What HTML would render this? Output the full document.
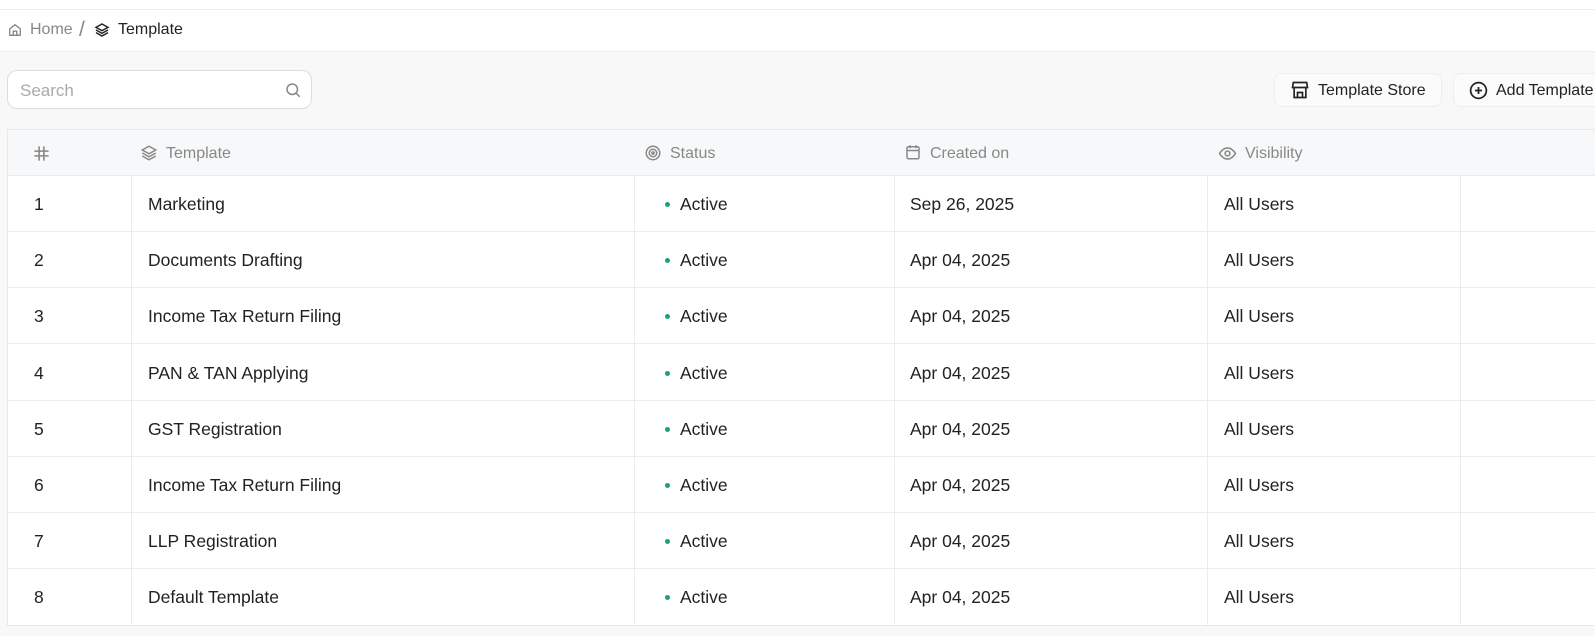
<!DOCTYPE html>
<html><head><meta charset="utf-8"><style>
*{box-sizing:border-box;margin:0;padding:0}
body{width:1595px;height:636px;overflow:hidden;background:#f8f8f8;font-family:"Liberation Sans",sans-serif;position:relative;color:#222}
.top{position:absolute;left:0;top:0;width:1595px;height:10px;background:#fff;border-bottom:1px solid #ececec}
.bc{position:absolute;left:0;top:10px;width:1595px;height:42px;background:#fff;border-bottom:1px solid #ececec}
.bc span{position:absolute;top:11px;font-size:16px}
.search{position:absolute;left:7px;top:70px;width:305px;height:39px;background:#fff;border:1px solid #ddd;border-radius:10px}
.search span{position:absolute;left:12px;top:10px;font-size:17px;color:#aaa}
.btn{position:absolute;top:73px;height:34px;background:#fbfbfb;border:1px solid #eee;border-radius:8px;font-size:16px;color:#222}
.btn span{position:absolute;top:8px}
.tbl{position:absolute;left:7px;top:129px;width:1600px;height:497px;background:#fff;border:1px solid #e8e8e8}
.hd{position:absolute;left:0;top:0;width:100%;height:46px;background:#f7f8f9;border-bottom:1px solid #ececec}
.hd span{position:absolute;top:15px;font-size:16px;color:#888}
.vl{position:absolute;top:46px;bottom:0;width:1px;background:#ececec}
.row{position:absolute;left:0;width:100%;height:56px;border-bottom:1px solid #ececec}
.row span{position:absolute;top:18px;font-size:17.5px;color:#222}
.dot{position:absolute;left:657px;top:26px;width:5px;height:5px;border-radius:50%;background:#1aa36f}
svg{position:absolute}
</style></head><body>
<div class="top"></div>
<div class="bc">
<svg style="left:8px;top:13px" width="14" height="14" viewBox="0 0 24 24" fill="none" stroke="#777" stroke-width="2"><path d="M3 10l9-7 9 7v11H3z"/><path d="M9 21v-7h6v7"/></svg>
<span style="left:30px;color:#888">Home</span>
<span style="left:79px;top:8px;font-size:21px;color:#888">/</span>
<svg style="left:94px;top:12px" width="16" height="16" viewBox="0 0 24 24" fill="none" stroke="#222" stroke-width="2.2"><path d="M12 3l9 5-9 5-9-5z"/><path d="M3 12l9 5 9-5"/><path d="M3 16l9 5 9-5"/></svg>
<span style="left:118px">Template</span>
</div>
<div class="search"><span>Search</span>
<svg style="left:276px;top:10px" width="18" height="18" viewBox="0 0 24 24" fill="none" stroke="#888" stroke-width="2"><circle cx="11" cy="11" r="7"/><path d="M16 16l5 5"/></svg></div>
<div class="btn" style="left:1274px;width:168px">
<svg style="left:15px;top:6px" width="20" height="20" viewBox="0 0 24 24" fill="none" stroke="#222" stroke-width="2"><path d="M4 3h16l1 6H3z"/><path d="M5 9v12h14V9"/><path d="M9 21v-6h6v6"/></svg>
<span style="left:43px">Template Store</span></div>
<div class="btn" style="left:1453px;width:180px">
<svg style="left:14px;top:6px" width="21" height="21" viewBox="0 0 24 24" fill="none" stroke="#222" stroke-width="2"><circle cx="12" cy="12" r="9"/><path d="M12 8v8M8 12h8"/></svg>
<span style="left:42px">Add Template</span></div>
<div class="tbl">
<div class="hd">
<svg style="left:24px;top:14px" width="19" height="19" viewBox="0 0 24 24" fill="none" stroke="#888" stroke-width="2"><path d="M9 3v18M15 3v18M3 9h18M3 15h18"/></svg>
<svg style="left:132px;top:14px" width="18" height="18" viewBox="0 0 24 24" fill="none" stroke="#888" stroke-width="2"><path d="M12 3l9 5-9 5-9-5z"/><path d="M3 12l9 5 9-5"/><path d="M3 16l9 5 9-5"/></svg>
<span style="left:158px">Template</span>
<svg style="left:636px;top:14px" width="18" height="18" viewBox="0 0 24 24" fill="none" stroke="#888" stroke-width="2"><circle cx="12" cy="12" r="9"/><circle cx="12" cy="12" r="5"/><circle cx="12" cy="12" r="1.5"/></svg>
<span style="left:662px">Status</span>
<svg style="left:896px;top:13px" width="18" height="18" viewBox="0 0 24 24" fill="none" stroke="#888" stroke-width="2"><rect x="4" y="5" width="16" height="16" rx="2"/><path d="M4 10h16M8 3v4M16 3v4"/></svg>
<span style="left:922px">Created on</span>
<svg style="left:1210px;top:14px" width="19" height="19" viewBox="0 0 24 24" fill="none" stroke="#888" stroke-width="2"><path d="M2 12s4-7 10-7 10 7 10 7-4 7-10 7S2 12 2 12z"/><circle cx="12" cy="12" r="3"/></svg>
<span style="left:1237px">Visibility</span>
</div>
<div class="row" style="top:46px"><span style="left:26px">1</span><span style="left:140px">Marketing</span><div class="dot"></div><span style="left:672px">Active</span><span style="left:902px">Sep 26, 2025</span><span style="left:1216px">All Users</span></div>
<div class="row" style="top:102px"><span style="left:26px">2</span><span style="left:140px">Documents Drafting</span><div class="dot"></div><span style="left:672px">Active</span><span style="left:902px">Apr 04, 2025</span><span style="left:1216px">All Users</span></div>
<div class="row" style="top:158px"><span style="left:26px">3</span><span style="left:140px">Income Tax Return Filing</span><div class="dot"></div><span style="left:672px">Active</span><span style="left:902px">Apr 04, 2025</span><span style="left:1216px">All Users</span></div>
<div class="row" style="top:214px;height:57px"><span style="left:26px;top:19px">4</span><span style="left:140px;top:19px">PAN &amp; TAN Applying</span><div class="dot" style="top:27px"></div><span style="left:672px;top:19px">Active</span><span style="left:902px;top:19px">Apr 04, 2025</span><span style="left:1216px;top:19px">All Users</span></div>
<div class="row" style="top:271px"><span style="left:26px">5</span><span style="left:140px">GST Registration</span><div class="dot"></div><span style="left:672px">Active</span><span style="left:902px">Apr 04, 2025</span><span style="left:1216px">All Users</span></div>
<div class="row" style="top:327px"><span style="left:26px">6</span><span style="left:140px">Income Tax Return Filing</span><div class="dot"></div><span style="left:672px">Active</span><span style="left:902px">Apr 04, 2025</span><span style="left:1216px">All Users</span></div>
<div class="row" style="top:383px"><span style="left:26px">7</span><span style="left:140px">LLP Registration</span><div class="dot"></div><span style="left:672px">Active</span><span style="left:902px">Apr 04, 2025</span><span style="left:1216px">All Users</span></div>
<div class="row" style="top:439px;height:56px;border:0"><span style="left:26px">8</span><span style="left:140px">Default Template</span><div class="dot"></div><span style="left:672px">Active</span><span style="left:902px">Apr 04, 2025</span><span style="left:1216px">All Users</span></div>
<div class="vl" style="left:123px"></div><div class="vl" style="left:626px"></div><div class="vl" style="left:886px"></div><div class="vl" style="left:1199px"></div><div class="vl" style="left:1452px"></div>
</div>
</body></html>
